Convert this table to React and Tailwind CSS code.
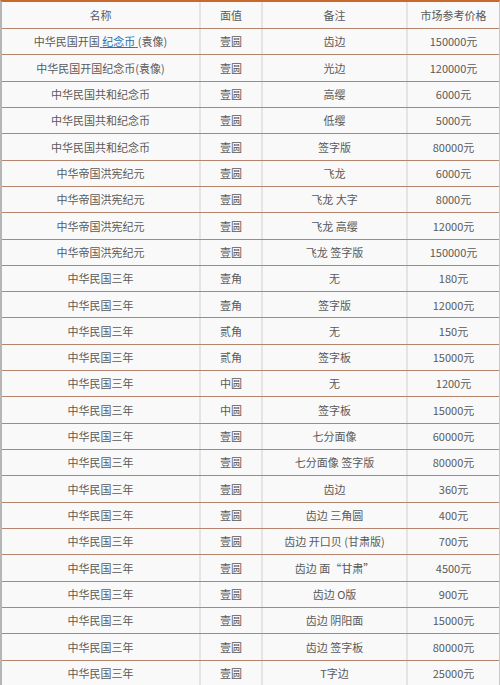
import React from "react"

// ** Price list rows
const rows = [
  ["link", "壹圆", "齿边", "150000元"],
  ["中华民国开国纪念币(袁像)", "壹圆", "光边", "120000元"],
  ["中华民国共和纪念币", "壹圆", "高缨", "6000元"],
  ["中华民国共和纪念币", "壹圆", "低缨", "5000元"],
  ["中华民国共和纪念币", "壹圆", "签字版", "80000元"],
  ["中华帝国洪宪纪元", "壹圆", "飞龙", "6000元"],
  ["中华帝国洪宪纪元", "壹圆", "飞龙 大字", "8000元"],
  ["中华帝国洪宪纪元", "壹圆", "飞龙 高缨", "12000元"],
  ["中华帝国洪宪纪元", "壹圆", "飞龙 签字版", "150000元"],
  ["中华民国三年", "壹角", "无", "180元"],
  ["中华民国三年", "壹角", "签字版", "12000元"],
  ["中华民国三年", "贰角", "无", "150元"],
  ["中华民国三年", "贰角", "签字板", "15000元"],
  ["中华民国三年", "中圆", "无", "1200元"],
  ["中华民国三年", "中圆", "签字板", "15000元"],
  ["中华民国三年", "壹圆", "七分面像", "60000元"],
  ["中华民国三年", "壹圆", "七分面像 签字版", "80000元"],
  ["中华民国三年", "壹圆", "齿边", "360元"],
  ["中华民国三年", "壹圆", "齿边 三角圆", "400元"],
  ["中华民国三年", "壹圆", "齿边 开口贝 (甘肃版)", "700元"],
  ["中华民国三年", "壹圆", "齿边 面“甘肃”", "4500元"],
  ["中华民国三年", "壹圆", "齿边 O版", "900元"],
  ["中华民国三年", "壹圆", "齿边 阴阳面", "15000元"],
  ["中华民国三年", "壹圆", "齿边 签字板", "80000元"],
  ["中华民国三年", "壹圆", "T字边", "25000元"],
]

function Row({ cells, header }) {
  return (
    <div
      className={
        "grid grid-cols-[199px_62px_145px_1fr] border-b-[1.5px] border-[#b4846c] " +
        (header ? "h-[27px]" : "h-[26.32px]")
      }
    >
      {cells.map((c, i) => (
        <div
          key={i}
          className={
            "flex items-center justify-center whitespace-nowrap " +
            (i < 3 ? "border-r-2 border-[#e4e4e4]" : "")
          }
        >
          {c === "link" ? (
            <span>
              中华民国开国
              <a href="#" className="text-[#2a6fb0] underline">
                {" "}纪念币{" "}
              </a>
              (袁像)
            </span>
          ) : (
            c
          )}
        </div>
      ))}
    </div>
  )
}

export default function App() {
  return (
    <div
      className="w-[500px] h-[685px] overflow-hidden bg-[#f9f9f9] text-[11px] text-[#595959] border-t-2 border-t-[#c9692c] border-l-2 border-l-[#b5b5b5] border-r border-r-[#c8c8c8]"
      style={{ fontFamily: '"Noto Sans CJK SC", "Noto Sans", sans-serif' }}
    >
      <Row header cells={["名称", "面值", "备注", "市场参考价格"]} />
      {rows.map((r, i) => (
        <Row key={i} cells={r} />
      ))}
    </div>
  )
}
